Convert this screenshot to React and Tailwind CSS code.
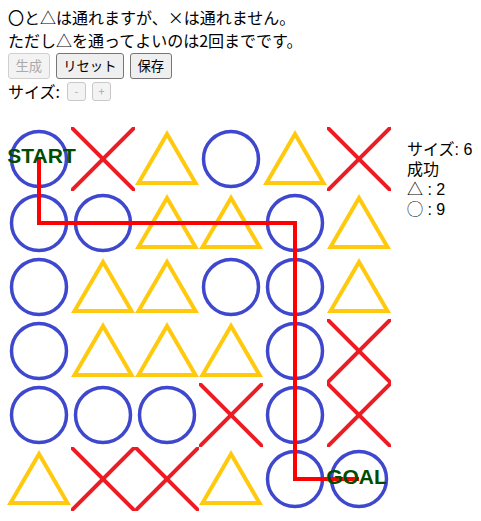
// App.jsx
const grid = [
  "oxtotx",
  "oottot",
  "ottoot",
  "otttox",
  "oooxox",
  "txxtoo",
];

const path = "32,32 32,96 288,96 288,352 352,352";

function Cell({ kind, x, y }) {
  return (
    <svg x={x} y={y} width="64" height="64" overflow="hidden">
      {kind === "o" && (
        <circle cx="32" cy="32" r="27.5" fill="none" stroke="#3f48cc" strokeWidth="3.5" />
      )}
      {kind === "t" && (
        <polygon
          points="32,7 3.5,56 60.5,56"
          fill="none"
          stroke="#ffc90e"
          strokeWidth="4"
        />
      )}
      {kind === "x" && (
        <g stroke="#ed1c24" strokeWidth="4">
          <line x1="-2" y1="-2" x2="66" y2="66" />
          <line x1="66" y1="-2" x2="-2" y2="66" />
        </g>
      )}
    </svg>
  );
}

function Board() {
  return (
    <svg width="384" height="384" className="-ml-px shrink-0">
      {grid.map((row, r) =>
        row.split("").map((k, c) => <Cell key={`${r}-${c}`} kind={k} x={c * 64} y={r * 64} />)
      )}
      <polyline points={path} fill="none" stroke="#ff0000" strokeWidth="4" />
      <g fill="#004d00" fontFamily="'Liberation Sans', Arial, sans-serif" fontWeight="bold" fontSize="21">
        <text x="34.5" y="36" textAnchor="middle">START</text>
        <text x="349.5" y="357" textAnchor="middle">GOAL</text>
      </g>
    </svg>
  );
}

export default function App() {
  const btn =
    "h-[26px] px-[6.5px] text-[13.33px] border rounded-[3px] leading-none";
  const small =
    "w-[19px] h-[19px] text-[11px] border rounded-[3px] leading-none border-[#c8c8c8] bg-[#f3f3f3] text-[#aaa] flex items-center justify-center";

  return (
    <div className="px-2 pt-[6px] text-black text-[16px] font-['Noto_Sans_CJK_JP',sans-serif]">
      <p className="leading-[23px]">〇と△は通れますが、×は通れません。</p>
      <p className="leading-[23px]">ただし△を通ってよいのは2回までです。</p>

      <div className="flex gap-[6px] mt-px">
        <button disabled className={`${btn} border-[#cfcfcf] bg-[#f3f3f3] text-[#aaa]`}>
          生成
        </button>
        <button className={`${btn} border-[#767676] bg-[#efefef]`}>リセット</button>
        <button className={`${btn} border-[#767676] bg-[#efefef]`}>保存</button>
      </div>

      <div className="flex items-center h-[22px] mt-px">
        <span className="leading-none">サイズ:</span>
        <button disabled className={`${small} ml-[7px]`}>-</button>
        <button disabled className={`${small} ml-[6px]`}>+</button>
      </div>

      <div className="flex mt-[25px]">
        <Board />
        <div className="ml-4 mt-[13px] leading-5 font-['Liberation_Sans','Noto_Sans_CJK_JP',sans-serif]">
          <div>サイズ: 6</div>
          <div>成功</div>
          <div>△ : 2</div>
          <div>◯ : 9</div>
        </div>
      </div>
    </div>
  );
}
